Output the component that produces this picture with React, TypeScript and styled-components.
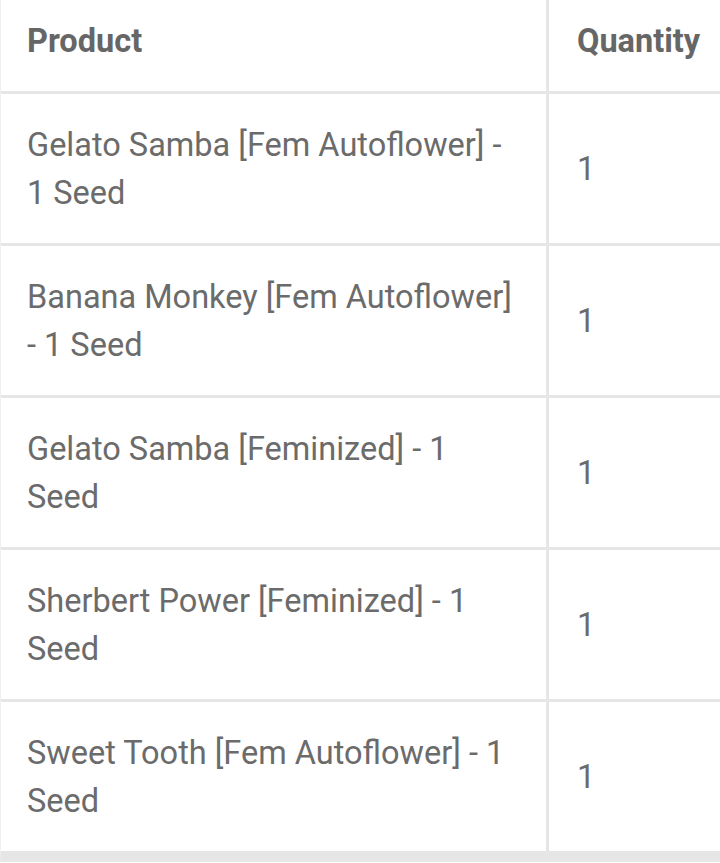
import React from "react";
import styled, { createGlobalStyle } from "styled-components";

const Global = createGlobalStyle`
  html, body { margin: 0; padding: 0; background: #ffffff; overflow: hidden; }
  body { font-family: Roboto, "Noto Sans", "Liberation Sans", sans-serif; }
`;

const Frame = styled.div`
  width: 720px;
  height: 863px;
  overflow: hidden;
  background: #fff;
`;

const Table = styled.table`
  width: 800px;
  border-collapse: separate;
  border-spacing: 0;
  table-layout: fixed;
  border-left: 1px solid #f0f0f0;
  border-bottom: 11px solid #e6e6e6;
`;

const ProductCol = styled.col`
  width: 548px;
`;

const HeadCell = styled.th<{ $first?: boolean }>`
  text-align: left;
  font-weight: 700;
  font-size: 32.5px;
  line-height: 48px;
  color: #666666;
  height: 91px;
  box-sizing: border-box;
  padding: 17px 0 26px ${(p) => (p.$first ? "26px" : "28px")};
  vertical-align: top;
  border-bottom: 3px solid #e6e6e6;
  border-right: ${(p) => (p.$first ? "3px solid #e6e6e6" : "none")};
  white-space: nowrap;
`;

const Cell = styled.td<{ $first?: boolean; $last?: boolean }>`
  font-size: 32.5px;
  line-height: 48px;
  color: #6b6b6b;
  height: ${(p) => (p.$last ? "149px" : "152px")};
  box-sizing: border-box;
  padding: 0 29px 0 ${(p) => (p.$first ? "26px" : "28px")};
  vertical-align: middle;
  border-bottom: ${(p) => (p.$last ? "none" : "3px solid #e6e6e6")};
  border-right: ${(p) => (p.$first ? "3px solid #e6e6e6" : "none")};
`;

const rows = [
  "Gelato Samba [Fem Autoflower] - 1 Seed",
  "Banana Monkey [Fem Autoflower] - 1 Seed",
  "Gelato Samba [Feminized] - 1 Seed",
  "Sherbert Power [Feminized] - 1 Seed",
  "Sweet Tooth [Fem Autoflower] - 1 Seed",
];

export default function App() {
  return (
    <Frame>
      <Global />
      <Table>
        <colgroup>
          <ProductCol />
          <col />
        </colgroup>
        <thead>
          <tr>
            <HeadCell $first>Product</HeadCell>
            <HeadCell>Quantity</HeadCell>
          </tr>
        </thead>
        <tbody>
          {rows.map((r, i) => (
            <tr key={i}>
              <Cell $first $last={i === rows.length - 1}>
                {r}
              </Cell>
              <Cell $last={i === rows.length - 1}>1</Cell>
            </tr>
          ))}
        </tbody>
      </Table>
    </Frame>
  );
}
